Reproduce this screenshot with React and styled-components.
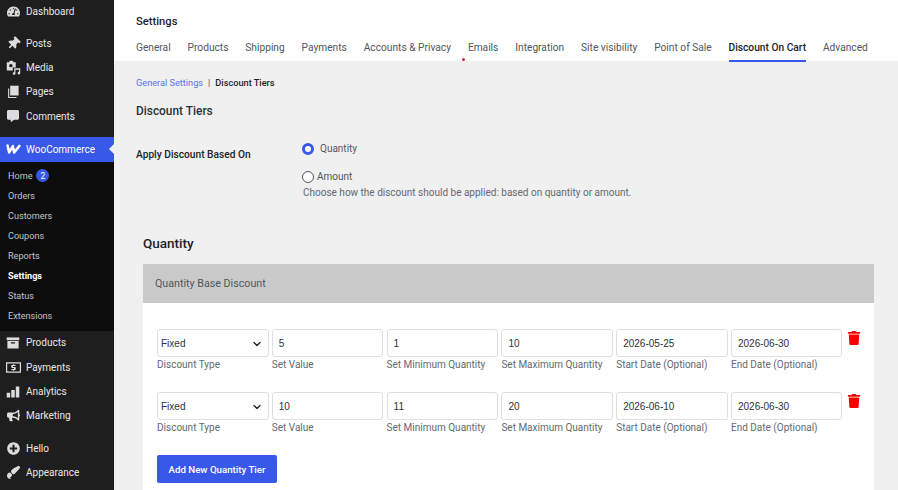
import React from "react";
import styled, { createGlobalStyle } from "styled-components";
import { FaTachometerAlt, FaThumbtack, FaCommentAlt, FaBullhorn, FaPlusCircle, FaPaintBrush, FaTrash } from "react-icons/fa";
import { FiChevronDown } from "react-icons/fi";

const GlobalStyle = createGlobalStyle`
    html, body {
        margin: 0;
        height: 100%;
        overflow: hidden;
    }
    body {
        font-family: Roboto, "Noto Sans", sans-serif;
        background: #f0f0f0;
    }
    * {
        box-sizing: border-box;
    }
`;

const PinIcon = () => (
    <TiltedPin><FaThumbtack size={13} /></TiltedPin>
);

const MediaIcon = () => (
    <svg viewBox="0 0 20 20" width="15" height="15" fill="currentColor">
        <path fillRule="evenodd" d="M1 3h3l1-2h4l1 2h3v7H9v4H1V3zm5.500 2.200a2.300 2.300 0 1 0 0 4.600 2.300 2.300 0 0 0 0-4.600z" />
        <path d="M11 11h8v6.500a1.800 1.800 0 1 1-1.600-1.800V13h-4.800v5a1.800 1.800 0 1 1-1.600-1.800V11z" />
    </svg>
);

const PagesIcon = () => (
    <svg viewBox="0 0 20 20" width="14" height="14" fill="currentColor">
        <path d="M6 1h12v14H6V1z" />
        <path d="M3 5h1.600v12H15v1.600H3V5z" />
    </svg>
);

const ProductsIcon = () => (
    <svg viewBox="0 0 20 20" width="14" height="14" fill="currentColor">
        <path d="M1 2h18v4H1V2z" />
        <path fillRule="evenodd" d="M2 7h16v11H2V7zm5 2v1.600h6V9H7z" />
    </svg>
);

const PaymentsIcon = () => (
    <svg viewBox="0 0 20 20" width="15" height="15" fill="currentColor">
        <path fillRule="evenodd" d="M0 3h20v14H0V3zm1.600 1.600v10.800h16.800V4.600H1.600z" />
        <path d="M9.200 5.600h1.600v1h2v1.500H9.400v1.100h2.600c.6 0 1 .4 1 1v2.200c0 .6-.4 1-1 1h-1.200v1H9.200v-1h-2v-1.500h3.400v-1.100H8c-.6 0-1-.4-1-1V7.600c0-.6.4-1 1-1h1.200v-1z" />
    </svg>
);

const AnalyticsIcon = () => (
    <svg viewBox="0 0 20 20" width="14" height="14" fill="currentColor">
        <path d="M1 11h5v7H1v-7zM7.500 7h5v11h-5V7zM14 2h5v16h-5V2z" />
    </svg>
);

const WooIcon = () => (
    <svg viewBox="0 0 24 16" width="15" height="10" fill="none" stroke="currentColor" strokeWidth="4" strokeLinejoin="round" strokeLinecap="round">
        <path d="M2.500 2.500 5 13.500 11 3.500 13 13.500 21.500 3" />
    </svg>
);

const topMenu = [
    { label: "Posts", icon: <PinIcon /> },
    { label: "Media", icon: <MediaIcon /> },
    { label: "Pages", icon: <PagesIcon /> },
    { label: "Comments", icon: <FaCommentAlt size={12} /> },
];

const subMenu = ["Orders", "Customers", "Coupons", "Reports", "Settings", "Status", "Extensions"];

const lowerMenu = [
    { label: "Products", icon: <ProductsIcon /> },
    { label: "Payments", icon: <PaymentsIcon /> },
    { label: "Analytics", icon: <AnalyticsIcon /> },
    { label: "Marketing", icon: <FaBullhorn size={13} /> },
];

const tabs = ["General", "Products", "Shipping", "Payments", "Accounts & Privacy", "Emails", "Integration", "Site visibility", "Point of Sale", "Discount On Cart", "Advanced"];

const tiers = [
    { value: "5", min: "1", max: "10", start: "2026-05-25", end: "2026-06-30" },
    { value: "10", min: "11", max: "20", start: "2026-06-10", end: "2026-06-30" },
];

const App = () => {
    return (
        <>
            <GlobalStyle />
            <Page>
                <Sidebar>
                    <MenuGroup $gap={9}>
                        <DashItem><MenuIcon><FaTachometerAlt size={13} /></MenuIcon>Dashboard</DashItem>
                    </MenuGroup>
                    <MenuGroup $gap={8}>
                        {topMenu.map((item) => (
                            <MenuItem key={item.label}><MenuIcon>{item.icon}</MenuIcon>{item.label}</MenuItem>
                        ))}
                    </MenuGroup>
                    <ActiveItem><MenuIcon><WooIcon /></MenuIcon>WooCommerce</ActiveItem>
                    <SubMenu>
                        <SubItem>Home <Badge>2</Badge></SubItem>
                        {subMenu.map((label) => (
                            <SubItem key={label} $active={label === "Settings"}>{label}</SubItem>
                        ))}
                    </SubMenu>
                    <MenuGroup $gap={8}>
                        {lowerMenu.map((item) => (
                            <MenuItem key={item.label}><MenuIcon>{item.icon}</MenuIcon>{item.label}</MenuItem>
                        ))}
                    </MenuGroup>
                    <MenuGroup>
                        <MenuItem><MenuIcon><FaPlusCircle size={13} /></MenuIcon>Hello</MenuItem>
                        <MenuItem><MenuIcon><FlippedBrush><FaPaintBrush size={13} /></FlippedBrush></MenuIcon>Appearance</MenuItem>
                    </MenuGroup>
                </Sidebar>
                <Main>
                    <Header>
                        <HeaderTitle>Settings</HeaderTitle>
                        <Tabs>
                            {tabs.map((tab) => (
                                <Tab key={tab} $active={tab === "Discount On Cart"}>{tab}</Tab>
                            ))}
                        </Tabs>
                        <RedDot />
                    </Header>
                    <Content>
                        <Crumbs>
                            <CrumbLink>General Settings</CrumbLink>
                            <CrumbSep>|</CrumbSep>
                            <CrumbCurrent>Discount Tiers</CrumbCurrent>
                        </Crumbs>
                        <SectionTitle>Discount Tiers</SectionTitle>
                        <OptionRow>
                            <OptionLabel>Apply Discount Based On</OptionLabel>
                            <OptionBody>
                                <RadioRow $gap={6}>
                                    <Radio $checked />
                                    Quantity
                                </RadioRow>
                                <RadioRow $gap={3} $top={15}>
                                    <Radio />
                                    Amount
                                </RadioRow>
                                <Hint>Choose how the discount should be applied: based on quantity or amount.</Hint>
                            </OptionBody>
                        </OptionRow>
                        <BlockTitle>Quantity</BlockTitle>
                        <Card>
                            <CardHeader>Quantity Base Discount</CardHeader>
                            <CardBody>
                                {tiers.map((tier) => (
                                    <TierRow key={tier.start}>
                                        <Field>
                                            <SelectWrap>
                                                <Select defaultValue="fixed">
                                                    <option value="fixed">Fixed</option>
                                                    <option value="percent">Percentage</option>
                                                </Select>
                                                <Chevron><FiChevronDown size={12} strokeWidth={2.5} /></Chevron>
                                            </SelectWrap>
                                            <FieldLabel>Discount Type</FieldLabel>
                                        </Field>
                                        <Field>
                                            <Input readOnly value={tier.value} />
                                            <FieldLabel>Set Value</FieldLabel>
                                        </Field>
                                        <Field>
                                            <Input readOnly value={tier.min} />
                                            <FieldLabel>Set Minimum Quantity</FieldLabel>
                                        </Field>
                                        <Field>
                                            <Input readOnly value={tier.max} />
                                            <FieldLabel>Set Maximum Quantity</FieldLabel>
                                        </Field>
                                        <Field>
                                            <Input readOnly value={tier.start} />
                                            <FieldLabel>Start Date (Optional)</FieldLabel>
                                        </Field>
                                        <Field>
                                            <Input readOnly value={tier.end} />
                                            <FieldLabel>End Date (Optional)</FieldLabel>
                                        </Field>
                                        <TrashButton><FaTrash size={14} /></TrashButton>
                                    </TierRow>
                                ))}
                                <AddButton>Add New Quantity Tier</AddButton>
                            </CardBody>
                        </Card>
                    </Content>
                </Main>
            </Page>
        </>
    );
};

const Page = styled.div`
    display: flex;
    width: 898px;
    height: 490px;
    overflow: hidden;
`;

const Sidebar = styled.nav`
    width: 114px;
    flex-shrink: 0;
    background: #1e1e1e;
    color: #f0f0f1;
    font-size: 10px;
`;

const MenuGroup = styled.div`
    margin-bottom: ${(props) => props.$gap || 0}px;
`;

const MenuItem = styled.div`
    display: flex;
    align-items: center;
    height: 24.4px;
    color: #e6e6e6;
`;

const DashItem = styled(MenuItem)`
    height: 22px;
`;

const MenuIcon = styled.span`
    display: flex;
    justify-content: center;
    align-items: center;
    width: 26px;
    color: #dcdcde;
`;

const TiltedPin = styled.span`
    display: flex;
    transform: rotate(45deg);
`;

const FlippedBrush = styled.span`
    display: flex;
    transform: scaleX(-1) rotate(-90deg);
`;

const ActiveItem = styled(MenuItem)`
    position: relative;
    height: 25px;
    background: #3858e9;
    color: #fff;
    &::after {
        content: "";
        position: absolute;
        right: 0;
        top: 7px;
        border: 5.5px solid transparent;
        border-right-color: #f0f0f0;
        border-left: 0;
    }
    ${MenuIcon} {
        color: #fff;
    }
`;

const SubMenu = styled.div`
    background: #0c0c0c;
    padding: 4px 0 5px;
`;

const SubItem = styled.div`
    display: flex;
    align-items: center;
    gap: 3px;
    height: 20px;
    padding-left: 8px;
    font-size: 9.1px;
    color: ${(props) => (props.$active ? "#fff" : "#c3c4c7")};
    font-weight: ${(props) => (props.$active ? 700 : 400)};
`;

const Badge = styled.span`
    display: inline-flex;
    justify-content: center;
    align-items: center;
    width: 13px;
    height: 13px;
    margin-left: 1px;
    border-radius: 50%;
    background: #3858e9;
    color: #fff;
    font-size: 8.5px;
`;

const Main = styled.main`
    flex: 1;
    min-width: 0;
`;

const Header = styled.header`
    position: relative;
    height: 61px;
    background: #fff;
    padding: 14px 0 0 22px;
`;

const HeaderTitle = styled.h1`
    margin: 0;
    font-size: 11.2px;
    line-height: 16px;
    font-weight: 500;
    color: #1e1e1e;
`;

const Tabs = styled.div`
    display: flex;
    gap: 16.900px;
    margin-top: 7px;
`;

const Tab = styled.a`
    height: 25px;
    padding-top: 3px;
    font-size: 10.2px;
    line-height: 16px;
    white-space: nowrap;
    color: ${(props) => (props.$active ? "#1e1e1e" : "#50575e")};
    font-weight: ${(props) => (props.$active ? 500 : 400)};
    border-bottom: ${(props) => (props.$active ? "2px solid #3858e9" : "0")};
`;

const RedDot = styled.span`
    position: absolute;
    left: 348px;
    top: 58px;
    width: 3px;
    height: 3px;
    border-radius: 50%;
    background: #e2202a;
`;

const Content = styled.div`
    padding: 15px 24px 0 22px;
`;

const Crumbs = styled.div`
    display: flex;
    align-items: center;
    font-size: 9.2px;
    line-height: 14px;
`;

const CrumbLink = styled.a`
    color: #5a73ea;
`;

const CrumbSep = styled.span`
    margin: 0 5px;
    color: #50575e;
`;

const CrumbCurrent = styled.span`
    color: #1e1e1e;
    font-weight: 500;
`;

const SectionTitle = styled.h2`
    margin: 12px 0 0;
    font-size: 11.900px;
    line-height: 18px;
    font-weight: 500;
    color: #2c3338;
`;

const OptionRow = styled.div`
    display: flex;
    margin-top: 22px;
`;

const OptionLabel = styled.div`
    width: 167px;
    padding-top: 6px;
    font-size: 10.200px;
    line-height: 14px;
    font-weight: 500;
    color: #1d2327;
`;

const OptionBody = styled.div`
    display: flex;
    flex-direction: column;
`;

const RadioRow = styled.label`
    display: flex;
    align-items: center;
    gap: ${(props) => props.$gap}px;
    margin-top: ${(props) => props.$top || 0}px;
    margin-left: -1px;
    font-size: 10px;
    line-height: 13px;
    color: #50575e;
`;

const Radio = styled.span`
    width: 12px;
    height: 12px;
    border-radius: 50%;
    background: #fff;
    border: ${(props) => (props.$checked ? "3.5px solid #3858e9" : "1px solid #50575e")};
`;

const Hint = styled.div`
    margin-top: 3px;
    font-size: 10px;
    line-height: 14px;
    color: #646970;
`;

const BlockTitle = styled.h3`
    margin: 33.500px 0 0 7px;
    font-size: 13.500px;
    line-height: 18px;
    font-weight: 500;
    color: #1d2327;
`;

const Card = styled.section`
    margin: 12.500px 0 0 7px;
    width: 731px;
`;

const CardHeader = styled.div`
    display: flex;
    align-items: center;
    height: 39px;
    padding-left: 12px;
    background: #c9c9c9;
    font-size: 10.700px;
    color: #50575e;
`;

const CardBody = styled.div`
    background: #fff;
    height: 200px;
    padding: 26px 14px 0;
`;

const TierRow = styled.div`
    display: grid;
    grid-template-columns: repeat(6, 111.500px) 15px;
    column-gap: 3.300px;
    height: 63px;
`;

const Field = styled.div`
    display: flex;
    flex-direction: column;
`;

const controlStyles = `
    width: 100%;
    height: 28px;
    border: 1px solid #dfdfe1;
    border-radius: 3px;
    background: #fff;
    font-family: "Liberation Sans", Arial, sans-serif;
    font-size: 10px;
    color: #2c3338;
    outline: none;
`;

const SelectWrap = styled.div`
    position: relative;
`;

const Select = styled.select`
    ${controlStyles}
    appearance: none;
    padding-left: 3px;
`;

const Chevron = styled.span`
    position: absolute;
    right: 6px;
    top: 9px;
    color: #1e1e1e;
    display: flex;
`;

const Input = styled.input`
    ${controlStyles}
    padding-left: 6px;
`;

const FieldLabel = styled.span`
    margin-top: 1px;
    font-size: 10px;
    line-height: 14px;
    white-space: nowrap;
    color: #646970;
`;

const TrashButton = styled.span`
    display: flex;
    justify-content: flex-end;
    padding-top: 2px;
    color: #f60000;
`;

const AddButton = styled.button`
    display: block;
    width: 120px;
    height: 28px;
    margin-top: 0;
    border: 0;
    border-radius: 2px;
    background: #3858e9;
    color: #fff;
    font-family: Roboto, sans-serif;
    font-size: 9.700px;
    font-weight: 500;
    white-space: nowrap;
`;

export default App;
